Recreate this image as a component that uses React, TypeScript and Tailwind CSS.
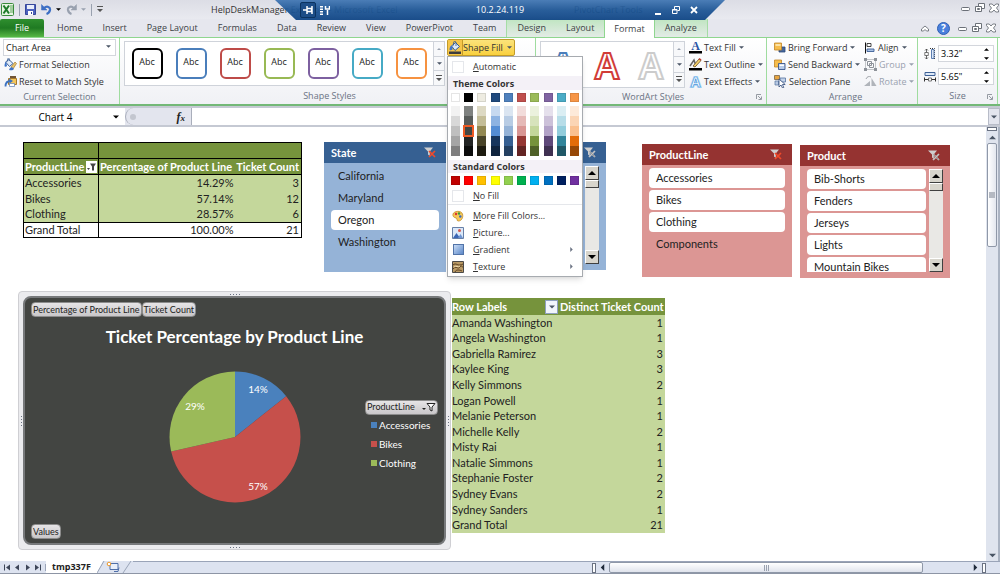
import type { ReactNode } from 'react';

const UI = "font-['Open_Sans','Noto_Sans',sans-serif]";

const shapeStyles = [
  'border-black',
  'border-[#4a7ebb]',
  'border-[#be4b48]',
  'border-[#98b954]',
  'border-[#7d60a0]',
  'border-[#46aac5]',
  'border-[#f69240]',
];

const themeColors = ['#ffffff', '#000000', '#eeece1', '#1f497d', '#4f81bd', '#c0504d', '#9bbb59', '#8064a2', '#4bacc6', '#f79646'];

const themeShades = [
  ['#f2f2f2', '#7f8280', '#ddd9c3', '#c6d9f0', '#dbe5f1', '#f2dcdb', '#ebf1dd', '#e5e0ec', '#dbeef3', '#fdeada'],
  ['#d8d8d8', '#585c5a', '#c4bd97', '#8db3e2', '#b8cce4', '#e5b9b7', '#d7e3bc', '#ccc1d9', '#b7dde8', '#fbd5b5'],
  ['#bfbfbf', '#434643', '#938953', '#548dd4', '#95b3d7', '#d99694', '#c3d69b', '#b2a2c7', '#92cddc', '#fac08f'],
  ['#a5a5a5', '#222423', '#494429', '#17365d', '#366092', '#953734', '#76923c', '#5f497a', '#31859b', '#e36c09'],
  ['#7f7f7f', '#0c0d0c', '#1d1b10', '#0f243e', '#244061', '#632423', '#4f6128', '#3f3151', '#205867', '#974806'],
];

const standardColors = ['#c00000', '#ff0000', '#ffc000', '#ffff00', '#92d050', '#00b050', '#00b0f0', '#0070c0', '#002060', '#7030a0'];

const productRows = [
  ['Accessories', '14.29%', '3'],
  ['Bikes', '57.14%', '12'],
  ['Clothing', '28.57%', '6'],
];

const people = [
  ['Amanda Washington', 1],
  ['Angela Washington', 1],
  ['Gabriella Ramirez', 3],
  ['Kaylee King', 3],
  ['Kelly Simmons', 2],
  ['Logan Powell', 1],
  ['Melanie Peterson', 1],
  ['Michelle Kelly', 2],
  ['Misty Rai', 1],
  ['Natalie Simmons', 1],
  ['Stephanie Foster', 2],
  ['Sydney Evans', 2],
  ['Sydney Sanders', 1],
  ['Grand Total', 21],
];

/* ---------- small icons ---------- */

function Arrow({ dir = 'down', className = 'text-gray-600', size = 5 }: { dir?: string; className?: string; size?: number }) {
  const paths: Record<string, string> = {
    down: 'M0 2h8L4 6z',
    up: 'M0 6h8L4 2z',
    left: 'M6 0v8L2 4z',
    right: 'M2 0v8l4-4z',
  };
  return (
    <svg width={size} height={size} viewBox="0 0 8 8" className={`shrink-0 ${className}`} fill="currentColor">
      <path d={paths[dir]} />
    </svg>
  );
}

function MoreArrow() {
  return (
    <svg width="6" height="7" viewBox="0 0 6 7" fill="#555">
      <path d="M0 0h6v1H0zM0 3h6L3 6z" />
    </svg>
  );
}

function WindowIcons() {
  return (
    <>
      <button aria-label="Minimize">
        <svg width="10" height="10" viewBox="0 0 10 10" fill="#fff" stroke="#6b7078">
          <rect x="0.5" y="4.5" width="8" height="3" rx="1" />
        </svg>
      </button>
      <button aria-label="Restore">
        <svg width="10" height="10" viewBox="0 0 10 10" fill="#fff" stroke="#6b7078">
          <path d="M3.5 0.5h6v5h-6z" />
          <path d="M0.5 3.5h6v5h-6zM2.5 5.5h2v1h-2z" />
        </svg>
      </button>
      <button aria-label="Close">
        <svg width="10" height="10" viewBox="0 0 10 10" fill="#fff" stroke="#6b7078" strokeWidth="0.9">
          <path d="M0.5 1h2.7L5 3l1.8-2h2.7v1.5L7.5 5l2 2.5V9H6.8L5 7 3.2 9H0.5V7.5l2-2.5-2-2.5z" />
        </svg>
      </button>
    </>
  );
}

function ExcelIcon() {
  return (
    <svg width="13" height="13" viewBox="0 0 13 13">
      <rect x="0.5" y="0.5" width="12" height="12" rx="1" fill="#e8f4e4" stroke="#3a8b3c" />
      <path d="M9 3h3M9 5h3M9 7h3M9 9h3" stroke="#5da75a" />
      <path d="M2.5 2.5l5.5 8M8 2.5l-5.5 8" stroke="#1d7a2a" strokeWidth="2" />
    </svg>
  );
}

function SaveIcon() {
  return (
    <svg width="11" height="11" viewBox="0 0 11 11">
      <path d="M0.5 0.5h10v10h-10z" fill="#4d62bd" stroke="#37479b" />
      <path d="M2 1h7v4H2z" fill="#e8edfa" />
      <path d="M3 7h5v4H3z" fill="#fff" />
      <path d="M6 8h1v2H6z" fill="#37479b" />
    </svg>
  );
}

function UndoIcon({ flip = false }: { flip?: boolean }) {
  return (
    <svg width="11" height="11" viewBox="0 0 11 11" className={flip ? '-scale-x-100 text-gray-400' : 'text-[#3d6fc4]'} fill="none" stroke="currentColor">
      <path d="M3 4C6 1.500 9.500 3 9 6 8.500 8.500 7 9.500 5.500 10" strokeWidth="2.200" />
      <path d="M0.500 0.500v5.500h5.500z" fill="currentColor" strokeWidth="0.500" />
    </svg>
  );
}

function BucketIcon() {
  return (
    <svg width="12" height="13" viewBox="0 0 12 13">
      <path d="M2.500 5l4-3.500 4 4L6 9.500z" fill="#dce9f8" stroke="#355a92" />
      <path d="M4.500 4.500V1.500c0-1.500 2.500-1.500 2.500 0V5" fill="none" stroke="#355a92" strokeWidth="0.800" />
      <path d="M0.500 8.500c0-2 1-4 2.500-4L3.500 8c0 1.500-3 1.500-3 .5z" fill="#3f75c9" />
      <path d="M0 10.500h12V13H0z" fill="#3d3d3d" />
    </svg>
  );
}

function FormatSelectionIcon() {
  return (
    <svg width="13" height="13" viewBox="0 0 13 13">
      <path d="M1.500 4l3.500-2.500 4 4-3.500 3z" fill="#dfeaf8" stroke="#3b5f95" />
      <path d="M3.500 3.500V1c0-1 2-1 2 0v2" fill="none" stroke="#3b5f95" strokeWidth="0.700" />
      <path d="M0.500 8c0-2 0.500-3.500 1.500-4l1 3.500c0 1.500-2.500 1.500-2.500 0.500z" fill="#3f75c9" />
      <path d="M7 9l4-5 1.500 1.500L9 11z" fill="#e9c46e" stroke="#956b21" strokeWidth="0.600" />
      <path d="M5 12c1-2.500 2-3 3.500-2.500L10 11c-1 1.500-3 1.500-5 1z" fill="#3f75c9" />
    </svg>
  );
}

function ResetIcon() {
  return (
    <svg width="13" height="13" viewBox="0 0 13 13">
      <path d="M4.500 3.500h8v6h-8z" fill="#f3c65b" stroke="#a7782c" />
      <path d="M6 1h6v2H6z" fill="#705437" />
      <path d="M1.500 11.500c0-4 2-5.500 5-5.500" fill="none" stroke="#3c73c2" strokeWidth="1.800" />
      <path d="M5 3.500L9 6 5.500 8.500z" fill="#3c73c2" />
      <path d="M5.500 8.500h5v3h-5z" fill="#fff" stroke="#5b7db1" strokeWidth="0.700" />
    </svg>
  );
}

function TextFillIcon() {
  return (
    <svg width="13" height="13" viewBox="0 0 13 13">
      <text x="6.500" y="9" textAnchor="middle" fontSize="12" fontWeight="bold" fontFamily="Liberation Serif" fill="#2a55a5">A</text>
      <path d="M0 10h13v2.500H0z" />
    </svg>
  );
}

function TextOutlineIcon() {
  return (
    <svg width="13" height="13" viewBox="0 0 13 13">
      <path d="M1 8l4-6 2 6" fill="none" stroke="#666" strokeWidth="1.500" />
      <path d="M4 8l6-7 2 1.500L6 9z" fill="#f5d26c" stroke="#644a1f" strokeWidth="0.800" />
      <path d="M9.500 1l1-1 2 1.500-1 1.200z" fill="#c23b32" />
      <path d="M0 10h13v2.500H0z" />
    </svg>
  );
}

function TextEffectsIcon() {
  return (
    <svg width="13" height="13" viewBox="0 0 13 13">
      <text x="6.500" y="11.500" textAnchor="middle" fontSize="14" fontWeight="bold" fontFamily="Liberation Sans" fill="#fff" stroke="#a9d4f5" strokeWidth="2.200">A</text>
      <text x="6.500" y="11.500" textAnchor="middle" fontSize="14" fontWeight="bold" fontFamily="Liberation Sans" fill="#fff" stroke="#4b96dc" strokeWidth="0.700">A</text>
    </svg>
  );
}

function BringForwardIcon() {
  return (
    <svg width="12" height="12" viewBox="0 0 12 12">
      <path d="M5 5h6v5H5z" fill="#47679c" stroke="#2f4978" strokeWidth="0.800" />
      <path d="M0.500 1h7v7h-7z" fill="#f6bd4c" stroke="#c28526" strokeWidth="0.800" />
      <path d="M1.500 2h5v2h-5z" fill="#fde3a4" />
    </svg>
  );
}

function SendBackwardIcon() {
  return (
    <svg width="12" height="12" viewBox="0 0 12 12">
      <path d="M0.500 1h7v7h-7z" fill="#f6bd4c" stroke="#c28526" strokeWidth="0.800" />
      <path d="M4.500 4.500h6.500v6H4.500z" fill="#b7cbe9" stroke="#39568b" strokeWidth="0.900" />
      <path d="M5.500 5.500h4.500v1.500H5.500z" fill="#fff" />
    </svg>
  );
}

function SelectionPaneIcon() {
  return (
    <svg width="13" height="13" viewBox="0 0 13 13">
      <path d="M0.500 0.500h5v4h-5z" fill="#e7a540" stroke="#7a6448" strokeWidth="0.800" />
      <path d="M6 3h5.500v4H6z" fill="#c3d3ea" stroke="#54729f" strokeWidth="0.800" />
      <path d="M1 6h3.500v4H1z" fill="#b8c9e4" stroke="#54729f" strokeWidth="0.700" />
      <path d="M5 4v8l2-2 1.500 3 1.300-.6-1.400-2.900h2.800z" fill="#fff" stroke="#2f4978" strokeWidth="0.800" />
    </svg>
  );
}

function AlignIcon() {
  return (
    <svg width="12" height="12" viewBox="0 0 12 12">
      <path d="M1.500 0.500v11" stroke="#111" />
      <path d="M3 1.500h4v3H3z" fill="#fff" stroke="#333" strokeWidth="0.900" />
      <path d="M3 7h7v2.500H3z" fill="#a9c2e6" stroke="#3c5f95" strokeWidth="0.900" />
    </svg>
  );
}

function GroupIcon() {
  return (
    <svg width="13" height="13" viewBox="0 0 13 13" fill="none" stroke="#8d9299">
      <path d="M1.500 1.500h10v10h-10z" strokeDasharray="1 1" />
      <path d="M3.500 3.500h4v4h-4zM5.500 5.500h4v4h-4z" />
      <path d="M0 0h3v3H0zM10 0h3v3h-3zM0 10h3v3H0zM10 10h3v3h-3z" fill="#8d9299" stroke="none" />
    </svg>
  );
}

function RotateIcon() {
  return (
    <svg width="13" height="13" viewBox="0 0 13 13" fill="#b0b4ba">
      <path d="M0 11h6V6zM7.500 11h5L7.500 3z" />
      <path d="M2 4c1-2.500 3-3 5-2" fill="none" stroke="#a0a4aa" />
    </svg>
  );
}

function HeightIcon() {
  return (
    <svg width="12" height="12" viewBox="0 0 12 12" fill="none">
      <path d="M2.500 1v10M1 2.500L2.500 1 4 2.500M1 9.500L2.500 11 4 9.500" stroke="#444" strokeWidth="0.800" />
      <path d="M0.800 4.500h3.500v3H0.800z" fill="#fff" stroke="#555" strokeWidth="0.800" />
      <path d="M6 0.500h4.500v11" stroke="#333" strokeDasharray="1 1" />
      <path d="M7.500 1.500h2.500v9H7.500z" fill="#dce8f7" stroke="#5c7db0" />
    </svg>
  );
}

function WidthIcon() {
  return (
    <svg width="12" height="12" viewBox="0 0 12 12" fill="none">
      <path d="M1 1.500h10v3H1z" fill="#dce8f7" stroke="#3c5f95" />
      <path d="M0.500 8.500h11M0.500 6.500v4M11.500 6.500v4" stroke="#333" />
      <path d="M4.500 7h3v3h-3z" fill="#fff" stroke="#555" strokeWidth="0.800" />
    </svg>
  );
}

function LauncherIcon() {
  return (
    <svg width="6" height="6" viewBox="0 0 6 6" fill="none" stroke="#8a9099" strokeWidth="0.900">
      <path d="M0.500 5V0.500H5M2 2l3 3M5.500 2.500v3h-3" />
    </svg>
  );
}

function ClearFilterIcon({ active }: { active: boolean }) {
  return (
    <svg width="12" height="11" viewBox="0 0 12 11" className="shrink-0">
      <path d="M0 0.500h9L5.800 4.500V9L4 7.500v-3z" fill="#cfcfcf" />
      <path d="M5 4l6 6M11 4l-6 6" stroke={active ? '#f04a2a' : '#c4c4c4'} strokeWidth="1.700" />
      <path d="M5.500 4.500l5 5" stroke={active ? '#f04a2a' : '#6f6f6f'} strokeWidth="0.500" />
    </svg>
  );
}

/* ---------- ribbon pieces ---------- */

function Group({ label, className = '', launcher = false, children }: { label: string; className?: string; launcher?: boolean; children: ReactNode }) {
  return (
    <section className={`flex flex-col border-r border-[#9fdc9f] ${className}`}>
      <div className="flex flex-1 pt-px">{children}</div>
      <div className="relative flex h-4 items-center justify-center text-[#6a7283]">
        {label}
        {launcher && (
          <button aria-label={`${label} options`} className="absolute right-1 bottom-1">
            <LauncherIcon />
          </button>
        )}
      </div>
    </section>
  );
}

function Cmd({ icon, label, arrow = false, disabled = false }: { icon: ReactNode; label: string; arrow?: boolean; disabled?: boolean }) {
  return (
    <button disabled={disabled} className={`flex h-[17px] items-center gap-0.5 whitespace-nowrap ${disabled ? 'text-gray-400' : 'text-[#333]'}`}>
      {icon}
      <span>{label}</span>
      {arrow && (
        <span className="pl-px">
          <Arrow className={disabled ? 'text-gray-400' : 'text-gray-600'} />
        </span>
      )}
    </button>
  );
}

function GalleryScroll() {
  return (
    <div className="flex w-[11px] flex-col divide-y divide-[#cfd3da] border-l border-[#cfd3da] bg-[#f7f8fa]">
      <button aria-label="Previous styles" className="flex flex-1 items-center justify-center">
        <Arrow dir="up" size={4} className="text-gray-400" />
      </button>
      <button aria-label="Next styles" className="flex flex-1 items-center justify-center">
        <Arrow size={5} />
      </button>
      <button aria-label="More styles" className="flex flex-1 items-center justify-center">
        <MoreArrow />
      </button>
    </div>
  );
}

function WordArt({ stroke }: { stroke: string }) {
  return (
    <button aria-label="WordArt style" className="flex w-11 items-center justify-center">
      <svg width="40" height="44" viewBox="0 0 40 44">
        <text x="20" y="36" textAnchor="middle" fontSize="36" fontWeight="bold" fontFamily="Liberation Sans" fill="#fff" stroke={stroke} strokeWidth="2">
          A
        </text>
      </svg>
    </button>
  );
}

function SizeField({ id, label, icon, value }: { id: string; label: string; icon: ReactNode; value: string }) {
  return (
    <div className="flex h-[17px] items-center gap-0.5">
      <label htmlFor={id} aria-label={label}>
        {icon}
      </label>
      <div className="flex h-full flex-1 items-center border border-[#d3d6dc] bg-white px-px">
        <input id={id} defaultValue={value} className="w-full min-w-0 flex-1 pl-px text-black outline-none" />
        <div className="flex w-3 flex-col items-center gap-1">
          <button aria-label={`Increase ${label}`}>
            <Arrow dir="up" size={5} className="text-black" />
          </button>
          <button aria-label={`Decrease ${label}`}>
            <Arrow size={5} className="text-black" />
          </button>
        </div>
      </div>
    </div>
  );
}

function Swatch({ color, selected = false, tall = false }: { color: string; selected?: boolean; tall?: boolean }) {
  return (
    <button
      aria-label={color}
      className={`w-[9px] ${tall ? 'h-2.5' : 'h-[9px] border border-black/10'} ${selected ? 'relative z-10 outline-2 -outline-offset-1 outline-[#ee5b24]' : ''}`}
      style={{ backgroundColor: color }}
    />
  );
}

function MenuItem({ icon, first, rest, sub = false }: { icon: ReactNode; first: string; rest: string; sub?: boolean }) {
  return (
    <button className="flex h-[17px] w-full items-center text-left">
      <span className="flex w-5 justify-center">{icon}</span>
      <span className="ml-[5px] flex-1">
        <span className="underline">{first}</span>
        {rest}
      </span>
      {sub && <Arrow dir="right" size={5} className="mr-2 text-gray-500" />}
    </button>
  );
}

function FillMenu() {
  const blank = <span className="size-3 border border-gray-200 bg-white" />;
  return (
    <div className="absolute top-full left-0 z-20 flex w-[136px] flex-col border border-[#a7abb0] bg-white pb-px text-[#333] shadow-md">
      <div className="flex h-[19px] items-center">
        <MenuItem icon={blank} first="A" rest="utomatic" />
      </div>
      <h3 className="flex h-3.5 items-center bg-[#f4f1f7] pt-px pl-[5px] font-bold">Theme Colors</h3>
      <div className="flex h-3.5 items-center justify-between px-[3px]">
        {themeColors.map((c) => (
          <Swatch key={c} color={c} />
        ))}
      </div>
      <div className="mt-0.5 mb-1 flex flex-col">
        {themeShades.map((row, r) => (
          <div key={r} className="flex justify-between px-[3px]">
            {row.map((c, i) => (
              <Swatch key={c} color={c} tall selected={r === 2 && i === 1} />
            ))}
          </div>
        ))}
      </div>
      <h3 className="flex h-[13px] items-center bg-[#f4f1f7] pl-[5px] font-bold">Standard Colors</h3>
      <div className="flex h-3.5 items-center justify-between px-[3px]">
        {standardColors.map((c) => (
          <Swatch key={c} color={c} />
        ))}
      </div>
      <div className="mb-0.5 border-b border-gray-200">
        <MenuItem icon={blank} first="N" rest="o Fill" />
      </div>
      <MenuItem
        first="M"
        rest="ore Fill Colors..."
        icon={
          <svg width="12" height="12" viewBox="0 0 12 12">
            <path d="M1 4c1-3 8-4 9.500 0 1 3.500-1 7-4 7C4 11 6 8.500 4 8 2 7.500 0.500 6.500 1 4z" fill="#f5c95b" stroke="#c18a2a" strokeWidth="0.800" />
            <circle cx="4" cy="4" r="1.200" fill="#d33" />
            <circle cx="7" cy="3.500" r="1.200" fill="#3a9a3a" />
            <circle cx="8.300" cy="6.500" r="1.200" fill="#3465c0" />
          </svg>
        }
      />
      <MenuItem
        first="P"
        rest="icture..."
        icon={
          <svg width="12" height="12" viewBox="0 0 12 12">
            <path d="M0.500 0.500h11v11H0.500z" fill="#dbe8f8" stroke="#6780a8" />
            <path d="M1 11l3.500-5L8 11z" fill="#3b67b5" />
            <path d="M6 11l2.500-4L11 11z" fill="#6f95d2" />
            <circle cx="7.500" cy="3.500" r="1.500" fill="#d6564a" />
          </svg>
        }
      />
      <MenuItem first="G" rest="radient" sub icon={<span className="size-[11px] border border-[#5274a8] bg-linear-to-br from-[#c9dcf5] to-[#5d88c8]" />} />
      <MenuItem
        first="T"
        rest="exture"
        sub
        icon={
          <svg width="12" height="12" viewBox="0 0 12 12">
            <path d="M0.500 0.500h11v11H0.500z" fill="#b99a66" stroke="#4c4a48" />
            <path d="M1 4c3-3 5 2 10-1M1 8c3-4 5 1 7-2s2 1 3 0M3 11c1-3 5-2 7-1" fill="none" stroke="#5a3f1f" />
            <path d="M2 6c2-2 4 1 6-1" fill="none" stroke="#f0dcae" />
          </svg>
        }
      />
    </div>
  );
}

/* ---------- worksheet pieces ---------- */

function SlicerScroll() {
  const cap = 'flex h-3.5 items-center justify-center border border-t-white border-l-white border-r-[#404040] border-b-[#404040] bg-[#d8d5cc]';
  return (
    <div className="flex w-3.5 flex-col bg-[#e9e8e5]">
      <button aria-label="Scroll up" className={cap}>
        <Arrow dir="up" size={8} className="text-black" />
      </button>
      <div className="h-2 border border-t-white border-l-white border-r-[#404040] border-b-[#404040] bg-[#d8d5cc]" />
      <div className="flex-1" />
      <button aria-label="Scroll down" className={cap}>
        <Arrow size={8} className="text-black" />
      </button>
    </div>
  );
}

interface SlicerProps {
  title?: string;
  items?: string[];
  selected?: string[];
  active?: boolean;
  scroll?: boolean;
  head: string;
  body: string;
  className?: string;
}

function Slicer({ title = '', items = [], selected = items, active = false, scroll = false, head, body, className = '' }: SlicerProps) {
  return (
    <section className={`flex shrink-0 flex-col text-[11px] ${body} ${className}`}>
      <header className={`flex h-[21px] items-center justify-between pr-2.5 pl-[7px] font-bold text-white ${head}`}>
        <span>{title}</span>
        <button aria-label="Clear filter">
          <ClearFilterIcon active={active} />
        </button>
      </header>
      <div className="flex min-h-0 flex-1 gap-[3px] px-[7px] pt-[3px] pb-1.5">
        <div className="flex flex-1 flex-col gap-0.5 overflow-hidden">
          {items.map((item) => (
            <button key={item} className={`h-5 shrink-0 rounded px-[7px] text-left text-[#222] ${selected.includes(item) ? 'bg-white' : ''}`}>
              {item}
            </button>
          ))}
        </div>
        {scroll && <SlicerScroll />}
      </div>
    </section>
  );
}

function ProductTable() {
  return (
    <table className="w-[279px] shrink-0 table-fixed border-collapse border border-black text-[11px] leading-3 text-[#222]">
      <thead className="bg-[#76933c] text-white">
        <tr className="h-4 border-b border-black">
          <td className="w-[75px] border-r border-black" />
          <td className="w-[137px]" />
          <td />
        </tr>
        <tr className="h-4 border-b border-black whitespace-nowrap">
          <th className="border-r border-black p-0 pl-px">
            <div className="flex items-center justify-between">
              ProductLine
              <button aria-label="Filter ProductLine" className="mr-px flex h-3 w-[11px] items-center justify-center bg-white">
                <svg width="9" height="8" viewBox="0 0 9 8" fill="#444">
                  <path d="M3 0.500h6L7 3.500v4H5v-4zM0 5h3L1.500 7z" />
                </svg>
              </button>
            </div>
          </th>
          <th className="p-0 pl-px text-left">Percentage of Product Line</th>
          <th className="p-0 pr-0.5 text-right">Ticket Count</th>
        </tr>
      </thead>
      <tbody>
        {productRows.map(([name, pct, count]) => (
          <tr key={name} className="h-4 bg-[#c4d79b]">
            <td className="border-r border-black p-0 pl-px">{name}</td>
            <td className="p-0 pr-0.5 text-right">{pct}</td>
            <td className="p-0 pr-0.5 text-right">{count}</td>
          </tr>
        ))}
        <tr className="h-[15px] border-t border-black bg-white">
          <td className="border-r border-black p-0 pl-px">Grand Total</td>
          <td className="p-0 pr-0.5 text-right">100.00%</td>
          <td className="p-0 pr-0.5 text-right">21</td>
        </tr>
      </tbody>
    </table>
  );
}

function PeopleTable() {
  return (
    <table className="h-[235px] w-[213px] shrink-0 table-fixed border-collapse bg-[#c4d79b] text-[11px] leading-3 whitespace-nowrap text-[#222]">
      <thead>
        <tr className="h-[17px] bg-[#76933c] text-white">
          <th className="w-[107px] p-0">
            <div className="flex items-center justify-between">
              Row Labels
              <button aria-label="Filter Row Labels" className="mr-px flex h-3.5 w-[13px] items-center justify-center border border-[#8fa0c0] bg-[#f2f5fb]">
                <Arrow size={6} />
              </button>
            </div>
          </th>
          <th className="p-0 pl-px text-left">Distinct Ticket Count</th>
        </tr>
      </thead>
      <tbody>
        {people.map(([name, count]) => (
          <tr key={name}>
            <td className="p-0">{name}</td>
            <td className="p-0 pr-0.5 text-right">{count}</td>
          </tr>
        ))}
      </tbody>
    </table>
  );
}

function FieldButton({ children }: { children: ReactNode }) {
  return (
    <button className="flex h-[15px] items-center justify-between rounded border border-[#8c8c8c] bg-linear-to-b from-[#e6e4e6] to-[#c9c7c9] px-px text-[9px] text-[#222]">
      {children}
    </button>
  );
}

function FrameDots({ vertical = false }: { vertical?: boolean }) {
  return (
    <div className={`flex gap-0.5 ${vertical ? 'flex-col' : ''}`}>
      {[0, 1, 2, 3].map((i) => (
        <span key={i} className="size-px bg-gray-500" />
      ))}
    </div>
  );
}

function PieChart() {
  return (
    <svg width="132" height="132" viewBox="-66 -66 132 132" className="text-[10px]" fill="#fff">
      <path d="M0 0V-65.500A65.500 65.500 0 0 1 51.210 -40.840Z" fill="#4a81bd" />
      <path d="M0 0L51.210 -40.840A65.500 65.500 0 1 1 -63.860 14.570Z" fill="#c6504b" />
      <path d="M0 0L-63.860 14.570A65.500 65.500 0 0 1 0 -65.500Z" fill="#9bba59" />
      <text x="23" y="-44" textAnchor="middle">14%</text>
      <text x="-40" y="-27" textAnchor="middle">29%</text>
      <text x="23" y="53" textAnchor="middle">57%</text>
    </svg>
  );
}

function Legend() {
  const entries = [
    ['Accessories', 'bg-[#4a81bd]'],
    ['Bikes', 'bg-[#c6504b]'],
    ['Clothing', 'bg-[#9bba59]'],
  ];
  return (
    <div className="flex w-[73px] flex-col pb-1">
      <FieldButton>
        ProductLine
        <svg width="14" height="9" viewBox="0 0 14 9">
          <path d="M5 0.500h8L10 4v4L8 7V4z" fill="#fff" stroke="#222" />
          <path d="M0 5h4L2 7z" fill="#222" />
        </svg>
      </FieldButton>
      <ul className="flex flex-col gap-[5px] pt-[3px] pl-1.5">
        {entries.map(([name, color]) => (
          <li key={name} className="flex h-3.5 items-center gap-0.5 text-[10px] text-white">
            <span className={`size-1.5 ${color}`} />
            {name}
          </li>
        ))}
      </ul>
    </div>
  );
}

function ChartPanel() {
  return (
    <figure className="flex h-[259px] w-[433px] shrink-0 flex-col rounded border border-[#cfcfd3] bg-[#ebebee]">
      <div className="flex h-1 items-center justify-center">
        <FrameDots />
      </div>
      <div className="flex flex-1">
        <div className="flex w-1 items-center justify-center">
          <FrameDots vertical />
        </div>
        <div className="flex flex-1 flex-col rounded-lg border-2 border-[#77797b] bg-[#434542] px-1.5 pt-1 pb-1">
          <div className="flex">
            <FieldButton>Percentage of Product Line</FieldButton>
            <FieldButton>Ticket Count</FieldButton>
          </div>
          <figcaption className="pt-2 text-center text-[17px] leading-6 font-bold text-white">Ticket Percentage by Product Line</figcaption>
          <div className="grid flex-1 grid-cols-[1fr_auto_1fr] items-center">
            <div />
            <PieChart />
            <div className="flex justify-end">
              <Legend />
            </div>
          </div>
          <div className="flex">
            <FieldButton>Values</FieldButton>
          </div>
        </div>
        <div className="flex w-1 items-center justify-center">
          <FrameDots vertical />
        </div>
      </div>
      <div className="flex h-1 items-center justify-center">
        <FrameDots />
      </div>
    </figure>
  );
}

function Worksheet() {
  const blue = { head: 'bg-[#366092]', body: 'bg-[#95b3d7]' };
  const red = { head: 'bg-[#953331]', body: 'bg-[#dc9694]' };
  return (
    <main className="min-w-0 flex-1 overflow-hidden bg-white pt-[15px] font-[Lato,sans-serif]">
      <div className="flex h-[149px] items-start pl-[23px]">
        <ProductTable />
        <Slicer {...blue} title="State" active items={['California', 'Maryland', 'Oregon', 'Washington']} selected={['Oregon']} className="ml-[22px] h-[130px] w-[122px]" />
        <Slicer {...blue} scroll className="ml-2.5 h-[128px] w-[150px]" />
        <Slicer
          {...red}
          title="ProductLine"
          active
          items={['Accessories', 'Bikes', 'Clothing', 'Components']}
          selected={['Accessories', 'Bikes', 'Clothing']}
          className="mt-0.5 ml-9 h-[133px] w-[150px]"
        />
        <Slicer {...red} title="Product" scroll items={['Bib-Shorts', 'Fenders', 'Jerseys', 'Lights', 'Mountain Bikes']} className="mt-[3px] ml-2 h-[133px] w-[150px]" />
      </div>
      <div className="flex items-start gap-px pl-[18px]">
        <ChartPanel />
        <div className="pt-[7px]">
          <PeopleTable />
        </div>
      </div>
    </main>
  );
}

function VerticalScroll() {
  return (
    <div className="flex w-3.5 flex-col items-center border-r-2 border-[#aab3c2] bg-[#dfe4ee]">
      <div className="h-1 w-2.5 border border-gray-500 bg-white" />
      <button aria-label="Scroll up" className="flex h-3 items-center">
        <Arrow dir="up" size={7} />
      </button>
      <div className="flex h-[104px] w-2.5 items-center justify-center rounded-xs border border-[#8f98a8] bg-linear-to-r from-white to-[#e3e7ef]">
        <span className="h-1.5 w-1.5 bg-[#b4b9c2]" />
      </div>
      <div className="flex-1" />
      <button aria-label="Scroll down" className="flex h-3 items-center">
        <Arrow size={7} />
      </button>
    </div>
  );
}

function SheetBar() {
  return (
    <footer className="flex h-[13px] items-center border-b border-[#8d95a5] bg-[#dde3f0]">
      <div className="flex w-[46px] items-center justify-around border-r border-[#9aa4b8] px-0.5">
        {['first', 'left', 'right', 'last'].map((k) => (
          <button key={k} aria-label={`${k} sheet`}>
            <svg width="7" height="7" viewBox="0 0 7 7" fill="#3d4658">
              {k === 'first' && <path d="M0 0.500h1v6H0zM6 0.500v6L2 3.500z" />}
              {k === 'left' && <path d="M5 0.500v6L1 3.500z" />}
              {k === 'right' && <path d="M2 0.500v6L6 3.500z" />}
              {k === 'last' && <path d="M6 0.500h1v6H6zM1 0.500v6L5 3.500z" />}
            </svg>
          </button>
        ))}
      </div>
      <button className="h-full bg-white pr-1.5 pl-1.5 text-[9px] leading-3 font-bold text-[#222]">tmp337F</button>
      <button aria-label="Insert worksheet" className="h-full">
        <svg width="36" height="12" viewBox="0 0 36 12" fill="none">
          <path d="M0 0h6L0 12z" fill="#fff" />
          <path d="M0 12L7 0M26 12l8-12" stroke="#9aa4b8" />
          <path d="M13 2.500h8v6h-8z" fill="#e8effa" stroke="#4f6fa8" />
          <path d="M17 10.500h4l1-4" stroke="#4f6fa8" />
          <circle cx="12" cy="3" r="1.800" fill="#fff" stroke="#ec9a2c" />
        </svg>
      </button>
      <div className="flex-1 self-stretch border-t border-[#9aa4b8]" />
      <div className="flex w-[408px] items-center gap-[3px] self-stretch border-t border-[#9aa4b8]">
        <span className="h-2.5 w-1 border border-gray-500 bg-white" />
        <button aria-label="Scroll left">
          <Arrow dir="left" size={7} className="text-gray-800" />
        </button>
        <div className="flex h-[11px] w-[314px] items-center justify-center rounded-xs border border-[#8f98a8] bg-linear-to-b from-white to-[#dfe3ec]">
          <span className="flex gap-px">
            <i className="h-1.5 w-px bg-gray-400" />
            <i className="h-1.5 w-px bg-gray-400" />
            <i className="h-1.5 w-px bg-gray-400" />
          </span>
        </div>
        <div className="flex-1" />
        <button aria-label="Scroll right">
          <Arrow dir="right" size={7} className="text-gray-800" />
        </button>
        <span className="mr-3.5 h-2.5 w-1 border border-gray-500 bg-white" />
      </div>
    </footer>
  );
}

/* ---------- window chrome ---------- */

function RemoteBar() {
  return (
    <div className="absolute top-0 left-1/2 z-30 grid h-5 w-[450px] -translate-x-1/2 grid-cols-3 items-center bg-linear-to-b from-[#4378b4]/95 via-[#1f5796]/95 to-[#0f4585]/95 px-[25px] text-white [clip-path:polygon(0_0,100%_0,calc(100%-20px)_100%,21px_100%)]">
      <div className="flex items-center gap-1">
        <button aria-label="Pin" className="flex h-4 w-4 items-center justify-center rounded-xs border border-[#0b3360] bg-[#1c4d87]">
          <svg width="10" height="8" viewBox="0 0 10 8" fill="none" stroke="#fff" strokeWidth="1.500">
            <path d="M0 4h4M4 0v8M4 2.500h4.500v3H4M9 0v8" />
          </svg>
        </button>
        <svg width="10" height="9" viewBox="0 0 10 9" stroke="#fff" fill="none" strokeWidth="1.500">
          <path d="M0 8.300h3M0 5.800h3M0 3.300h3M0 0.800h3M7.500 9V4M5.500 0v3h4V0" />
        </svg>
      </div>
      <span className="text-center font-medium">10.2.24.119</span>
      <div className="flex items-center justify-end gap-2.5 pr-0.5">
        <button aria-label="Minimize session">
          <svg width="7" height="9" viewBox="0 0 7 9" fill="#fff">
            <path d="M0 7h6v2H0z" />
          </svg>
        </button>
        <button aria-label="Restore session">
          <svg width="8" height="8" viewBox="0 0 8 8" fill="none" stroke="#fff">
            <path d="M2.500 3V0.500h5v4H5.500M0.500 3.500h4.500v4H0.500zM0.500 4h4.500" />
          </svg>
        </button>
        <button aria-label="Close session">
          <svg width="8" height="8" viewBox="0 0 8 8" stroke="#fff" strokeWidth="1.800">
            <path d="M1 1l6 6M7 1L1 7" />
          </svg>
        </button>
      </div>
    </div>
  );
}

function TitleBar() {
  return (
    <header className="flex h-[19px] items-center bg-linear-to-b from-[#dcdde5] to-[#e9eaf0] px-px">
      <div className="flex w-[210px] items-center gap-[5px]">
        <ExcelIcon />
        <span className="h-3 w-px bg-gray-400" />
        <button aria-label="Save">
          <SaveIcon />
        </button>
        <button aria-label="Undo" className="flex items-center gap-1">
          <UndoIcon />
          <Arrow className="text-black" />
        </button>
        <button aria-label="Redo" className="flex items-center gap-1">
          <UndoIcon flip />
          <Arrow className="text-gray-400" />
        </button>
        <span className="h-3 w-px bg-gray-400" />
        <button aria-label="Customize toolbar">
          <MoreArrow />
        </button>
      </div>
      <h1 className="w-[363px] whitespace-nowrap text-[#333]">HelpDeskManager Example - Microsoft Excel</h1>
      <span className="flex-1">PivotChart Tools</span>
      <div className="flex items-center gap-1 pb-1">
        <WindowIcons />
      </div>
    </header>
  );
}

function TabBar() {
  const tabs = ['Home', 'Insert', 'Page Layout', 'Formulas', 'Data', 'Review', 'View', 'PowerPivot', 'Team'];
  return (
    <nav className="flex h-[19px] items-stretch border-b border-[#8fd68f] bg-[#e6e7ee] text-[#3c3f45]">
      <button className="mr-[3px] w-11 rounded-t-xs bg-linear-to-b from-[#2f8f2f] via-[#1f7a22] to-[#56b845] text-white">File</button>
      {tabs.map((t) => (
        <button key={t} className="px-2.5">
          {t}
        </button>
      ))}
      <div className="flex border-x border-[#a5dca5] bg-linear-to-b from-[#bfe5c1] to-[#e3ebe6]">
        <button className="px-2.5">Design</button>
        <button className="px-2.5">Layout</button>
        <button className="-mb-px border-x border-[#8fd68f] bg-white px-[9px]">Format</button>
        <button className="px-2.5">Analyze</button>
      </div>
      <div className="flex flex-1 items-center justify-end gap-1 pr-1">
        <button aria-label="Collapse ribbon" className="pr-1">
          <svg width="8" height="7" viewBox="0 0 8 7" fill="#fff" stroke="#6b7078" strokeWidth="0.900">
            <path d="M0.500 4L4 1l3.500 3v2H5.500L4 4.500 2.500 6h-2z" />
          </svg>
        </button>
        <button aria-label="Help" className="mr-1 flex size-[13px] items-center justify-center rounded-full border border-[#2d5fb4] bg-[#4a80dc] text-[10px] leading-none font-bold text-white">
          ?
        </button>
        <WindowIcons />
      </div>
    </nav>
  );
}

function Ribbon() {
  return (
    <div className="flex h-[68px] border-b-2 border-[#73b877] bg-linear-to-b from-white to-[#f0f1f5]">
      <Group label="Current Selection" className="w-[120px]">
        <div className="flex flex-1 flex-col pr-[3px] pl-1">
          <div className="relative h-[17px] -ml-px border border-[#d3d6dc] bg-white">
            <select aria-label="Chart element" className="h-full w-full appearance-none pl-0.5 leading-3 text-[#222] outline-none">
              <option>Chart Area</option>
            </select>
            <span className="pointer-events-none absolute top-1 right-1">
              <Arrow />
            </span>
          </div>
          <Cmd icon={<FormatSelectionIcon />} label="Format Selection" />
          <Cmd icon={<ResetIcon />} label="Reset to Match Style" />
        </div>
      </Group>

      <Group label="Shape Styles" className="w-[416px] pl-1">
        <div className="mt-0.5 mb-0.5 flex border border-[#cfd3da] bg-white">
          {shapeStyles.map((c) => (
            <button key={c} className="flex w-11 items-center justify-center">
              <span className={`flex size-[31px] items-center justify-center rounded-md border-2 bg-white pb-1 text-[#222] ${c}`}>Abc</span>
            </button>
          ))}
          <GalleryScroll />
        </div>
        <div className="relative ml-0.5 h-[17px]">
          <button className="flex h-full items-center rounded-xs border border-[#c29b29] bg-linear-to-b from-[#fbe37a] to-[#f9d03c] text-[#333]">
            <span className="flex h-full items-center border-r border-[#c29b29] bg-[#f5c64a] px-px">
              <BucketIcon />
            </span>
            <span className="pr-1 whitespace-nowrap">Shape Fill</span>
            <span className="pr-0.5">
              <Arrow />
            </span>
          </button>
          <FillMenu />
        </div>
      </Group>

      <Group label="WordArt Styles" launcher className="flex-1 pl-1">
        <div className="mt-0.5 mb-0.5 flex border border-[#cfd3da] bg-white">
          <WordArt stroke="#4a7ebb" />
          <WordArt stroke="#d13c38" />
          <WordArt stroke="#cccccc" />
          <GalleryScroll />
        </div>
        <div className="flex flex-col items-start pl-1">
          <Cmd icon={<TextFillIcon />} label="Text Fill" arrow />
          <Cmd icon={<TextOutlineIcon />} label="Text Outline" arrow />
          <Cmd icon={<TextEffectsIcon />} label="Text Effects" arrow />
        </div>
      </Group>

      <Group label="Arrange" className="w-[151px] pl-[7px]">
        <div className="flex w-[90px] flex-col items-start">
          <Cmd icon={<BringForwardIcon />} label="Bring Forward" arrow />
          <Cmd icon={<SendBackwardIcon />} label="Send Backward" arrow />
          <Cmd icon={<SelectionPaneIcon />} label="Selection Pane" />
        </div>
        <div className="flex flex-col items-start">
          <Cmd icon={<AlignIcon />} label="Align" arrow />
          <Cmd icon={<GroupIcon />} label="Group" arrow disabled />
          <Cmd icon={<RotateIcon />} label="Rotate" arrow disabled />
        </div>
      </Group>

      <Group label="Size" launcher className="mr-0.5 w-20">
        <div className="flex flex-1 flex-col gap-1.5 pt-1.5 pr-[3px] pl-1.5">
          <SizeField id="shape-height" label="Shape height" icon={<HeightIcon />} value={'3.32"'} />
          <SizeField id="shape-width" label="Shape width" icon={<WidthIcon />} value={'5.65"'} />
        </div>
      </Group>
    </div>
  );
}

function FormulaBar() {
  return (
    <div className="flex h-[21px] border-y-2 border-[#c5c9d3] bg-[#e3e5ee]">
      <div className="relative flex w-[125px] items-center bg-white">
        <input aria-label="Name box" defaultValue="Chart 4" className="w-full pr-3.5 text-center text-[10px] text-black outline-none" />
        <span className="absolute right-1.5">
          <Arrow size={6} className="text-black" />
        </span>
      </div>
      <div className="flex w-[66px] items-center justify-between rounded-l-full border-l border-[#a9aebb] pr-1.5 pl-1">
        <span className="size-1.5 rounded-full bg-[#c3c6cf]" />
        <button className="font-['Liberation_Serif',serif] text-xs font-bold text-[#222] italic">
          f<span className="text-[9px]">x</span>
        </button>
      </div>
      <input aria-label="Formula" className="min-w-0 flex-1 border-l border-[#a9aebb] bg-white outline-none" />
      <button aria-label="Expand formula bar" className="flex w-3 items-center justify-center border border-[#b8bcc8]">
        <Arrow size={6} />
      </button>
    </div>
  );
}

export default function App() {
  return (
    <div className={`relative flex h-screen flex-col overflow-hidden bg-white text-[9px] leading-3 ${UI}`}>
      <TitleBar />
      <RemoteBar />
      <TabBar />
      <Ribbon />
      <FormulaBar />
      <div className="flex min-h-0 flex-1">
        <Worksheet />
        <VerticalScroll />
      </div>
      <SheetBar />
    </div>
  );
}
